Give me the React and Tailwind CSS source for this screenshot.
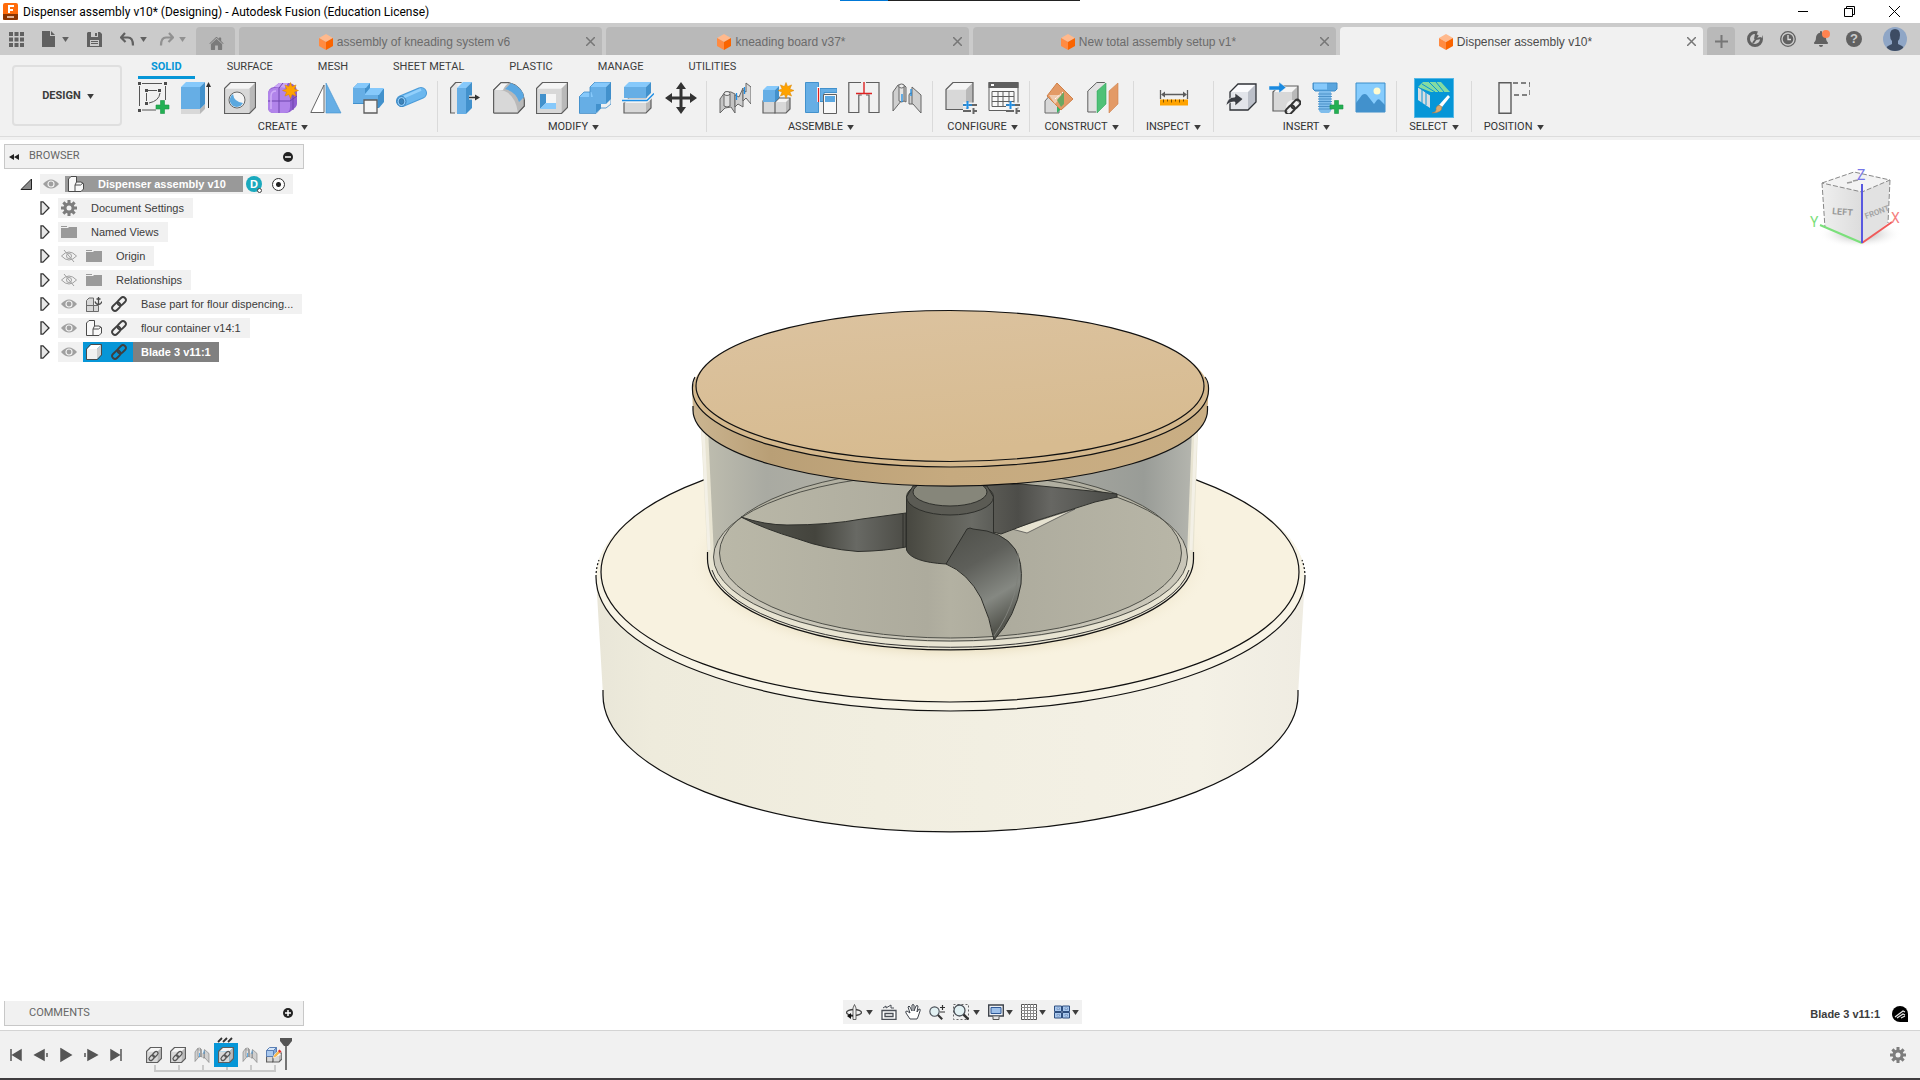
import { IoHome } from "react-icons/io5";
import { FaBell } from "react-icons/fa";

const BLUE = { front: "#66aee5", top: "#86c9fb", side: "#4291cc" };
const GREY = { front: "#d8d8d8", top: "#f5f5f5", side: "#b9b9b9" };

const Box = ({ x, y, w, h, d, c = GREY, stroke = "none" }) => (
  <g stroke={stroke} strokeWidth="1" strokeLinejoin="round">
    <path d={`M${x} ${y + d}h${w}v${h}h${-w}z`} fill={c.front} />
    <path d={`M${x} ${y + d}l${d} ${-d}h${w}l${-d} ${d}z`} fill={c.top} />
    <path d={`M${x + w} ${y + d}l${d} ${-d}v${h}l${-d} ${d}z`} fill={c.side} />
  </g>
);

// Grey box where only the silhouette is stroked
const OutlinedBox = ({ x, y, w, h, d, c = GREY }) => (
  <g>
    <Box x={x} y={y} w={w} h={h} d={d} c={c} />
    <path
      d={`M${x} ${y + d}l${d} ${-d}h${w}v${h}l${-d} ${d}h${-w}z`}
      fill="none"
      stroke="#5f5f5f"
      strokeWidth="1.2"
    />
  </g>
);

const Star = ({ x, y }) => (
  <path
    transform={`translate(${x} ${y})`}
    d="M0-8L1.6-3.9L5.6-5.6L3.9-1.6L8 0L3.9 1.6L5.6 5.6L1.6 3.9L0 8L-1.6 3.9L-5.6 5.6L-3.9 1.6L-8 0L-3.9-1.6L-5.6-5.6L-1.6-3.9Z"
    fill="#ffa300"
    stroke="#d98500"
    strokeWidth=".5"
  />
);

const Plus = ({ x, y }) => (
  <path
    transform={`translate(${x} ${y})`}
    d="M-2-6.500h4v4.500h4.500v4h-4.500v4.500h-4v-4.500h-4.500v-4h4.500z"
    fill="#23b053"
    stroke="#1b9645"
    strokeWidth=".6"
  />
);

const Sliders = () => (
  <g strokeWidth="2">
    <path d="M18 23h14M18 29h14" stroke="#f1f1f1" strokeWidth="5" />
    <path d="M18 23h3M24 23h8M18 29h8M29 29h3" stroke="#666" />
    <path d="M22.500 19v8" stroke="#1f8fe6" />
    <path d="M18 23h9" stroke="#1f8fe6" strokeWidth="1.500" />
    <path d="M28.500 26v6" stroke="#666" />
  </g>
);

const Chain = ({ x = 0, y = 0, color = "#333" }) => (
  <g
    transform={`translate(${x} ${y}) rotate(-45)`}
    fill="none"
    stroke={color}
    strokeWidth="2"
  >
    <rect x="-9" y="-3" width="10" height="6" rx="3" />
    <rect x="-1" y="-3" width="10" height="6" rx="3" />
  </g>
);

const icons = {
  sketch: (
    <>
      <path d="M4 1.500h20M1.500 4v20M27.500 4v14M4 28h14M10 8.500h9M8.500 11v8M11 21q10-2 11-10" stroke="#555" fill="none" />
      <path d="M0 0h3v3h-3zM26 0h3v3h-3zM0 27h3v3h-3zM7 7h3v3h-3zM20 7h3v3h-3zM7 20h3v3h-3z" fill="#4c4c4c" />
      <Plus x={24.500} y={25} />
    </>
  ),
  extrude: (
    <>
      <Box x={0} y={22} w={19} h={5} d={5} />
      <Box x={0} y={0} w={19} h={22} d={5} c={BLUE} />
      <path d="M27.500 26V3" stroke="#333" />
      <path d="M25 5l2.500-5l2.500 5z" fill="#333" />
    </>
  ),
  hole: (
    <>
      <OutlinedBox x={0.5} y={0.5} w={25} h={25} d={6} />
      <circle cx="13" cy="18" r="8" fill="#f4f4f4" stroke="#666" />
      <path d="M9 12q1 8 10 9a7 7 0 1 1-10-9z" fill="#5ba8df" />
    </>
  ),
  form: (
    <>
      <path d="M1 12Q1 6 7 5L12 1H22Q30 2 30 10V22Q30 25 24 29Q22 31 17 31H7Q1 31 1 25Z" fill="#8f5ed0" />
      <path d="M1 12Q1 7 7 6H17Q23 7 23 12V25Q23 31 17 31H7Q1 31 1 25Z" fill="#b184ea" />
      <path d="M7 5L12 1H21L18 6Z" fill="#caa5f6" />
      <path d="M1 19H23M12 6V31M12 6L16 1M23 19L30 14M26 28V10" stroke="#6f45ad" fill="none" />
      <path d="M4 27V14Q4 9 9 9" stroke="#cfadf8" strokeWidth="1.500" fill="none" />
      <Star x={23.500} y={8.500} />
    </>
  ),
  mirror: (
    <>
      <path d="M.8 30.500H14V3z" fill="#fff" stroke="#666" />
      <path d="M16 1L31 31H16z" fill="#66aee5" stroke="#4291cc" strokeWidth=".6" />
    </>
  ),
  derive: (
    <>
      <path d="M0 6l5-5h12v6h14v13l-5 6h-9l-5-4H0z" fill="#4291cc" />
      <path d="M0 6h12v7h13v12h-9v-4H0z" fill="#66aee5" />
      <path d="M0 6l5-5h12l-4 5zM12 12l5-6h14l-5 7H12z" fill="#86c9fb" />
      <path d="M11 18h13v13h-13z" fill="#f4f4f4" stroke="#5c5c5c" strokeWidth="1.300" />
    </>
  ),
  pipe: (
    <>
      <path d="M6 19L25 11" stroke="#4b9bd8" strokeWidth="12" strokeLinecap="round" />
      <path d="M6 19L25 11" stroke="#6bb7ee" strokeWidth="10" strokeLinecap="round" />
      <path d="M8 15L25 7.500" stroke="#92d0fc" strokeWidth="2.500" />
      <ellipse cx="5.500" cy="19.500" rx="4.500" ry="5" fill="#8ccafa" stroke="#357fb8" />
      <ellipse cx="5.500" cy="19.500" rx="2.300" ry="3" fill="#3b83ba" stroke="#285e8a" strokeWidth=".6" />
    </>
  ),
  pressPull: (
    <>
      <path d="M.6 31V6l5-5.500h2V31z" fill="#e4e4e4" />
      <path d="M5 31H.6V6l5-5.500h6" fill="none" stroke="#5f5f5f" strokeWidth="1.200" />
      <Box x={7} y={0} w={9} h={26} d={6} c={BLUE} />
      <path d="M19 15.500h8" stroke="#f1f1f1" strokeWidth="4" />
      <path d="M19 15.500h8" stroke="#333" strokeWidth="1.500" />
      <path d="M25 12.500l5 3l-5 3z" fill="#333" />
    </>
  ),
  fillet: (
    <>
      <path d="M.6 31V8L8 .6h8Q30 4 31.400 18v6L25 31z" fill="#b9b9b9" stroke="#5f5f5f" />
      <path d="M1 31V8h6q15 2 18 23z" fill="#d8d8d8" />
      <path d="M1 8L8 1h8q-4 2-6 7z" fill="#f5f5f5" />
      <path d="M12 7l6-6q12 5 13 14l-5 5Q23 10 12 7z" fill="#5ba8e2" />
      <path d="M.6 31V8L8 .6h8M31.400 18v6L25 31H.6" fill="none" stroke="#5f5f5f" strokeWidth="1.200" />
    </>
  ),
  shell: (
    <>
      <OutlinedBox x={0.5} y={0.5} w={25} h={25} d={6} />
      <path d="M4 12h16v15H4z" fill="#f5f5f5" />
      <path d="M4 12h6v9l-6 6z" fill="#4291cc" />
      <path d="M10 21h10v6H4z" fill="#86c9fb" />
    </>
  ),
  combine: (
    <>
      <Box x={11} y={0} w={16} h={17} d={5} c={BLUE} />
      <Box x={0} y={10} w={17} h={16} d={5} c={BLUE} />
      <path d="M11 5h16v17h-11z" fill="#66aee5" />
      <path d="M0 15l5-5h6v5M11 10V5l5-5h16v22l-5 4h-5l-5 5.500H.5V15" fill="none" stroke="#3d8ac6" strokeWidth=".8" />
    </>
  ),
  split: (
    <>
      <OutlinedBox x={2} y={16} w={22} h={10} d={5} />
      <Box x={2} y={0} w={22} h={11} d={5} c={BLUE} />
      <path d="M0 18.500h25l7-7" stroke="#f1f1f1" strokeWidth="4" fill="none" />
      <path d="M0 18.500h25l7-7" stroke="#1f8fe6" strokeWidth="1.500" fill="none" />
    </>
  ),
  move: (
    <path d="M16 0l5 7h-3.500v7.500h7.500V11l7 5l-7 5v-3.500h-7.500v7.500H21l-5 7l-5-7h3.500v-7.500H7V21l-7-5l7-5v3.500h7.500V7H11z" fill="#333" />
  ),
  joint: (
    <g stroke="#666" strokeLinejoin="round">
      <path d="M1 31V17l5-7h6l4 2v19l-4-6-6 1z" fill="#c4c4c4" />
      <path d="M5 12v12q3 2 6 0V12" fill="#dedede" />
      <ellipse cx="8" cy="11.500" rx="3" ry="2" fill="#eee" />
      <path d="M16 13l4 2l4-9v19l-5-3-3 3z" fill="#cfcfcf" />
      <path d="M24 8l3 2V1l5 4v17l-5-6-3 3z" fill="#dadada" />
      <path d="M17.500 11v7M25.500 5v7" stroke="#1f8fe6" strokeWidth="1.300" />
    </g>
  ),
  newComponent: (
    <>
      <OutlinedBox x={1} y={15} w={12} h={12} d={4} />
      <OutlinedBox x={13} y={16} w={11} h={11} d={4} />
      <Box x={1} y={4} w={12} h={12} d={4} c={BLUE} />
      <Star x={24} y={8.500} />
    </>
  ),
  rigid: (
    <>
      <path d="M.5.500h13v30H.5zM15 6.500h17v4H19v9h-4z" fill="#66aee5" stroke="#4291cc" />
      <path d="M13.500 5v15" stroke="#fff" strokeWidth="3" />
      <path d="M13.500 6v14" stroke="#d22" strokeWidth="1.300" />
      <path d="M18.500 12.500h13v19h-13z" fill="#f8f8f8" stroke="#5f5f5f" />
      <path d="M20 14h10v6H20z" fill="#5ba8e2" />
    </>
  ),
  asBuilt: (
    <g fill="none">
      <path d="M13 .500H.8v30h10V13h3M18 .500h13v30h-10V13h-3" stroke="#5f5f5f" strokeWidth="1.200" />
      <path d="M16 0v11M8 11.500h16" stroke="#d22" strokeWidth="1.400" />
    </g>
  ),
  jointOrigin: (
    <g stroke="#666" strokeLinejoin="round">
      <path d="M2 29V10l5-7h6l2 2v15l-4-2z" fill="#cfcfcf" />
      <path d="M8 4v15q3 2 5 0V4" fill="#e4e4e4" />
      <ellipse cx="10.500" cy="4" rx="2.800" ry="2" fill="#eee" />
      <path d="M18 13q0-2 3-2V5l9 8v18l-8-9h-4z" fill="#d0d0d0" />
      <path d="M21 11v11" />
      <path d="M11 12v8M20 7v7" stroke="#1f8fe6" strokeWidth="1.300" />
    </g>
  ),
  configure: (
    <>
      <OutlinedBox x={1} y={0.5} w={20} h={20} d={7} />
      <Sliders />
    </>
  ),
  configTable: (
    <>
      <path d="M1 .500h29v28H1z" fill="#f8f8f8" stroke="#5f5f5f" />
      <path d="M.5 0h30v6H.5z" fill="#5f5f5f" />
      <path d="M3 2h3v2H3z" fill="#fff" />
      <path d="M4 9.500h22v15H4zM4 14.500h22M4 19.500h22M10 9.500v15M15 9.500v15M21 9.500v15" stroke="#5f5f5f" fill="none" />
      <Sliders />
    </>
  ),
  plane: (
    <>
      <path d="M1 31V19l6-7h8v19z" fill="#d8d8d8" stroke="#6b6b6b" />
      <path d="M13 31l7-7V10l-7 7z" fill="#35b463" />
      <path d="M13 1l16 16l-12 11L3 14z" fill="#e39a66" stroke="#d08048" />
      <path d="M5 13h14l-8 9z" fill="#f0cbb0" />
      <path d="M13 18l7-8v12l-3 3z" fill="#6ba661" />
      <path d="M11 17l8-7" stroke="#fff" strokeDasharray="2 1" />
    </>
  ),
  offsetPlane: (
    <>
      <path d="M1 30V9l9-8.500h9L9 10v20z" fill="#e2e2e2" />
      <path d="M9 30H.8V9l9-8.500h8" fill="none" stroke="#5f5f5f" />
      <path d="M10 9l9-8v21l-9 9z" fill="#4fc177" stroke="#2fa259" strokeWidth=".6" />
      <path d="M22 9l9-8v21l-9 9z" fill="#e39a66" stroke="#cd824f" strokeWidth=".6" />
    </>
  ),
  measure: (
    <>
      <path d="M2.500 8v9M29.500 8v9M5 12.500h22" stroke="#5c5c5c" strokeWidth="1.300" />
      <path d="M3 12.500l4-3v6zM29 12.500l-4-3v6z" fill="#5c5c5c" />
      <path d="M2 17.500h28v6H2z" fill="#ffa300" />
      <path d="M5.500 17.500v3M9.500 17.500v2M13.500 17.500v3M17.500 17.500v2M21.500 17.500v3M25.500 17.500v2" stroke="#7a4e00" />
    </>
  ),
  insertDerive: (
    <>
      <Box x={4} y={2} w={18} h={18} d={8} c={{ front: "#e2e4ea", top: "#fbfbfd", side: "#bcc0c9" }} />
      <path d="M4 28V10l8-8h18v18l-8 8z" fill="none" stroke="#2f3237" strokeWidth="1.300" />
      <path d="M0 24q1-9 9-9v-4l8 6l-8 7v-4q-5-1-9 4z" fill="#3a3d44" stroke="#fff" strokeWidth=".6" />
    </>
  ),
  insertLink: (
    <>
      <OutlinedBox x={4} y={4} w={19} h={19} d={6} />
      <path d="M0 4h10V0l7 5.500l-7 5.500V8H0z" fill="#1a8ae0" stroke="#f1f1f1" strokeWidth=".5" />
      <circle cx="24" cy="25" r="7" fill="#f1f1f1" />
      <Chain x={24} y={25} />
    </>
  ),
  fastener: (
    <>
      <path d="M1 1h24v6l-2 2H3L1 7z" fill="#5aa5de" stroke="#3f8bc6" />
      <path d="M2 1.500h13v6H2z" fill="#86c9fb" />
      <path d="M7 9h12v20l-2 2H9l-2-2z" fill="#7fbdec" />
      <path d="M6 12h14M6 14.500h14M6 17h14M6 19.500h14M6 22h14M6 24.500h14M6 27h14" stroke="#4c92c9" />
      <Plus x={24.500} y={25} />
    </>
  ),
  canvas: (
    <>
      <path d="M1 1h29v29H1z" fill="#86ccfd" stroke="#3b8dc9" />
      <path d="M1 21l6-8q3-2 5 0l7 9l3-4q2-2 4 1l4 4v7H1z" fill="#4291cc" />
      <circle cx="22" cy="9" r="3.500" fill="#fffbd0" />
    </>
  ),
  select: (
    <>
      <path d="M0 5l5-5h18l9 10H13z" fill="#84dba2" />
      <path d="M0 5l12 8v13L0 18z" fill="#d9dde0" />
      <path d="M4 2l13 8M11 0l10 10M18 0l8 10M0 5l12 8M4 8v13M8 10v13" stroke="#0696d7" />
      <path d="M21 23l9-10l2 2l-8 10z" fill="#fff" />
      <path d="M14 31q5-1 4-5q2-5 6-1q0 6-10 6z" fill="#dba970" stroke="#a87b45" strokeWidth=".5" />
    </>
  ),
  position: (
    <g fill="none" stroke="#5c5c5c" strokeWidth="1.400">
      <path d="M1 .700h12v30.500H1z" />
      <path d="M15 1h17v12H15" strokeDasharray="5 3" />
    </g>
  ),
};

const groups = [
  { name: "CREATE", pad: "pl-3 pr-[9px]", items: ["sketch", "extrude", "hole", "form", "mirror", "derive", "pipe"] },
  { name: "MODIFY", pad: "pl-3 pr-[9px]", items: ["pressPull", "fillet", "shell", "combine", "split", "move"] },
  { name: "ASSEMBLE", pad: "pl-3 pr-[9px]", items: ["joint", "newComponent", "rigid", "asBuilt", "jointOrigin"] },
  { name: "CONFIGURE", pad: "pl-3 pr-[9px]", items: ["configure", "configTable"] },
  { name: "CONSTRUCT", pad: "px-[14px]", items: ["plane", "offsetPlane"] },
  { name: "INSPECT", pad: "px-3", items: ["measure"] },
  { name: "INSERT", pad: "pl-3 pr-[9px]", items: ["insertDerive", "insertLink", "fastener", "canvas"] },
  { name: "SELECT", pad: "px-3", items: ["select"] },
  { name: "POSITION", pad: "px-3", items: ["position"] },
];

const ribbonTabs = ["SOLID", "SURFACE", "MESH", "SHEET METAL", "PLASTIC", "MANAGE", "UTILITIES"];

const documents = [
  { name: "assembly of kneading system v6" },
  { name: "kneading board v37*" },
  { name: "New total assembly setup v1*" },
  { name: "Dispenser assembly v10*", active: true },
];

const Caret = ({ className = "text-[#3c3c3c]" }) => (
  <svg viewBox="0 0 8 6" className={`h-[5px] w-[7px] shrink-0 ${className}`} aria-hidden="true">
    <path d="M0 0h8l-4 6z" fill="currentColor" />
  </svg>
);

const Icon = ({ size = 16, box = size, children, className = "" }) => (
  <svg
    width={size}
    height={size}
    viewBox={`0 0 ${box} ${box}`}
    fill="none"
    aria-hidden="true"
    className={`shrink-0 ${className}`}
  >
    {children}
  </svg>
);

const TitleBar = () => (
  <header className="flex h-[23px] items-center bg-white pl-[3px] pr-[3px] font-[Roboto,sans-serif] text-xs text-black">
    <svg width="15" height="17" viewBox="0 0 15 17" className="mr-[5px]" aria-hidden="true">
      <path d="M2 0h11q2 0 2 2v14q0 1-2 1H2q-2 0-2-1V2q0-2 2-2z" fill="#ff6b0a" />
      <path d="M0 11h15v5q0 1-2 1H2q-2 0-2-1z" fill="#8a3300" />
      <path d="M5 2h6v2H7v2h3v2H7v2H5z" fill="#fff" />
      <path d="M4 13h7v2H4z" fill="#e2b596" />
    </svg>
    <h1 className="flex-1 truncate">
      Dispenser assembly v10* (Designing) - Autodesk Fusion (Education License)
    </h1>
    <button aria-label="Minimize" className="flex h-5 w-[45px] items-center justify-center">
      <Icon size={11}><path d="M0 5.500h10" stroke="#000" /></Icon>
    </button>
    <button aria-label="Restore" className="flex h-5 w-[46px] items-center justify-center">
      <Icon size={11}><path d="M.5 2.500h8v8h-8zM2.500 2.500v-2h8v8h-2" stroke="#000" /></Icon>
    </button>
    <button aria-label="Close" className="flex h-5 w-[45px] items-center justify-center">
      <Icon size={11}><path d="M0 0l11 11M11 0L0 11" stroke="#000" /></Icon>
    </button>
  </header>
);

const DocumentTab = ({ name, active }) => (
  <div
    className={`flex min-w-0 flex-1 items-center rounded-t pl-3 ${
      active ? "bg-[#f1f1f1] text-[#4b4b4b]" : "bg-[#b9b9b9] text-[#6b6b6b]"
    }`}
  >
    <button className="flex min-w-0 flex-1 items-center justify-center gap-1 pt-px text-xs">
      <svg width="14" height="16" viewBox="0 0 14 16" className="shrink-0" aria-hidden="true">
        <path d="M0 4l7-4l7 4l-7 4z" fill="#ffb98d" />
        <path d="M0 4l7 4v8l-7-4z" fill="#ff8b42" />
        <path d="M14 4l-7 4v8l7-4z" fill="#fa6400" />
      </svg>
      <span className="truncate">{name}</span>
    </button>
    <button aria-label={`Close ${name}`} className="flex w-6 justify-center">
      <Icon size={9}><path d="M0 0l9 9M9 0L0 9" stroke="#777" strokeWidth="1.500" /></Icon>
    </button>
  </div>
);

const TabBar = () => (
  <div className="flex h-8 bg-[#cbcbcb] pt-1 text-[#616161]">
    <div className="flex w-[196px] shrink-0 items-center pb-1 pl-[9px]">
      <button aria-label="Data panel" className="mr-[17px]">
        <Icon size={15}>
          <path d="M0 0h4v4H0zM5.500 0h4v4h-4zM11 0h4v4h-4zM0 5.500h4v4H0zM5.500 5.500h4v4h-4zM11 5.500h4v4h-4zM0 11h4v4H0zM5.500 11h4v4h-4zM11 11h4v4h-4z" fill="#616161" />
        </Icon>
      </button>
      <button aria-label="File" className="mr-[18px] flex items-center gap-[5px]">
        <Icon size={16}><path d="M1 0h8v5h5v11H1zM10 0l4 4h-4z" fill="#616161" /></Icon>
        <Caret className="text-[#616161]" />
      </button>
      <button aria-label="Save" className="mr-[18px]">
        <Icon size={15}>
          <path d="M1 0h12l2 2v13H0V1z" fill="#616161" />
          <path d="M4 0h7v5H4zM3 8h9v6H3z" fill="#cbcbcb" />
          <path d="M8 1h2v3H8zM4 9h7v1H4zM4 11h7v1H4z" fill="#616161" />
        </Icon>
      </button>
      <button aria-label="Undo" className="mr-3 flex items-center gap-[5px]">
        <Icon size={15}>
          <path d="M5 1L1 5.500L5.500 10M1 5.500h7q5 0 5 8" stroke="#616161" strokeWidth="2.200" />
        </Icon>
        <Caret className="text-[#616161]" />
      </button>
      <button aria-label="Redo" className="flex items-center gap-[5px]">
        <Icon size={15}>
          <path d="M10 1l4 4.500L9.500 10M14 5.500H7q-5 0-5 8" stroke="#919191" strokeWidth="2.200" />
        </Icon>
        <Caret className="text-[#919191]" />
      </button>
    </div>
    <div className="flex min-w-0 flex-1 gap-1">
      <button aria-label="Home" className="flex w-[39px] shrink-0 items-center justify-center rounded-t bg-[#b9b9b9] pl-[2px] pt-1">
        <IoHome className="size-[15px] text-[#7b7b7b]" />
      </button>
      {documents.map((doc) => (
        <DocumentTab key={doc.name} {...doc} />
      ))}
      <button aria-label="New design" className="flex w-7 shrink-0 items-center justify-center rounded-t bg-[#b9b9b9]">
        <Icon size={13}><path d="M0 6.500h13M6.500 0v13" stroke="#777" strokeWidth="2" /></Icon>
      </button>
    </div>
    <div className="flex shrink-0 items-center gap-[17px] pb-1 pl-3 pr-[13px]">
      <button aria-label="Extensions">
        <Icon size={16}>
          <circle cx="8" cy="8" r="6.500" stroke="#616161" strokeWidth="3" />
          <path d="M8 9l3 1l4-4V0h-4z" fill="#cbcbcb" />
          <path d="M6 12l3-4M8 8l1-5M9 8l5-1M8 8l3-4" stroke="#616161" strokeWidth="2" />
        </Icon>
      </button>
      <button aria-label="Job status">
        <Icon size={16}>
          <circle cx="8" cy="8" r="7.300" stroke="#616161" strokeWidth="1.300" />
          <circle cx="8" cy="8" r="5.300" fill="#616161" />
          <path d="M8 4v4.500h3" stroke="#ddd" strokeWidth="1.300" />
        </Icon>
      </button>
      <button aria-label="Notifications" className="relative">
        <FaBell className="size-4" />
        <span className="absolute -right-px -top-px size-2 rounded-full bg-[#ff8350]" />
      </button>
      <button aria-label="Help" className="mr-1 flex size-4 items-center justify-center rounded-full bg-[#616161] text-[13px] font-bold leading-4 text-[#cbcbcb]">
        ?
      </button>
      <button aria-label="Account">
        <Icon size={24}>
          <circle cx="12" cy="12" r="12" fill="#8fa6c6" />
          <path d="M7 8q0-6 5-6t5 6q0 4-2 6v3l4 2q2 1 1 2q-3 3-8 3t-8-3q-1-1 1-2l4-2v-3q-2-2-2-6z" fill="#3d4c63" />
        </Icon>
      </button>
    </div>
  </div>
);

const ToolGroup = ({ name, pad, items, last }) => (
  <section
    aria-label={name}
    className={`flex h-[51px] flex-col items-center ${pad} ${last ? "" : "border-r border-[#dadada]"}`}
  >
    <div className="flex h-[34px] shrink-0 items-center gap-[11px]">
      {items.map((item) => (
        <button
          key={item}
          aria-label={item}
          className={
            item === "select"
              ? "flex h-10 w-10 items-center justify-center border border-[#56b8e6] bg-[#0696d7]"
              : "flex"
          }
        >
          <Icon size={32}>{icons[item]}</Icon>
        </button>
      ))}
    </div>
    <button className="flex shrink-0 items-center gap-1 pt-[6px] text-[11px] leading-3 text-[#333]">
      {name} <Caret />
    </button>
  </section>
);

const Ribbon = () => (
  <div className="flex h-[85px] border-b-[3px] border-[#f1f1f1] bg-[#f1f1f1] font-[Roboto,sans-serif]">
    <div className="flex flex-1 border-b border-[#dcdcdc] pl-3">
      <button className="mt-[10px] flex h-[61px] w-[110px] shrink-0 items-center justify-center gap-[6px] rounded border-2 border-[#dfdfdf] pl-[2px] pt-[2px] text-[11px] font-bold text-[#3c3c3c]">
        DESIGN <Caret />
      </button>
      <div className="pl-1">
        <nav className="flex h-[26px] gap-[19px] pb-[2px] pl-3">
          {ribbonTabs.map((tab) => (
            <button
              key={tab}
              className={`border-b-[3px] px-[13px] pt-[3px] text-[11px] leading-3 ${
                tab === "SOLID"
                  ? "border-[#0696d7] font-bold text-[#0696d7]"
                  : "border-transparent text-[#3c3c3c]"
              }`}
            >
              {tab}
            </button>
          ))}
        </nav>
        <div className="flex">
          {groups.map((group, i) => (
            <ToolGroup key={group.name} {...group} last={i === groups.length - 1} />
          ))}
        </div>
      </div>
    </div>
  </div>
);

const Eye = () => (
  <Icon>
    <path d="M0 8q8-9 16 0q-8 9-16 0z" fill="#a0a0a0" />
    <circle cx="8" cy="8" r="3" stroke="#f1f1f1" strokeWidth="1.200" />
  </Icon>
);

const EyeOff = () => (
  <Icon>
    <path d="M.5 8q7.500-8 15 0q-7.500 8-15 0z" stroke="#a0a0a0" />
    <circle cx="8" cy="8" r="2.500" stroke="#a0a0a0" />
    <path d="M3 2l10 12" stroke="#a0a0a0" />
  </Icon>
);

const Folder = () => (
  <Icon>
    <path d="M0 2h6v1H0zM0 4h7l1-1h8v11H0z" fill="#9a9a9a" />
  </Icon>
);

const Gear = () => (
  <Icon>
    <g fill="#7d7d7d">
      <path d="M6.500 0h3v16h-3zM0 6.500h16v3H0z" />
      <path d="M6.500 0h3v16h-3zM0 6.500h16v3H0z" transform="rotate(45 8 8)" />
      <circle cx="8" cy="8" r="5.500" />
    </g>
    <circle cx="8" cy="8" r="2.500" fill="#f1f1f1" />
  </Icon>
);

const Assembly = () => (
  <Icon>
    <path d="M.5 15.500V3L3 .5h5.500V6h4.500l2.500 1.500V13L13 15.500z" fill="#f8f8f8" stroke="#4a4a4a" strokeLinejoin="round" />
    <path d="M7 15V9h5.500l2.500-2M7 9l1.500-3" stroke="#4a4a4a" />
  </Icon>
);

const Grounded = () => (
  <Icon>
    <path d="M.5 15.500v-11L3 2h4.500v13.500zM7 9.500h5.500v6H.5M.5 9.500H7" fill="#d8d8d8" stroke="#6b6b6b" />
    <path d="M12.500 1v7M10.500 3h4M9 5.500q1 3 3.500 3t3.500-3" stroke="#4a4a4a" strokeWidth="1.300" />
  </Icon>
);

const Body = () => (
  <Icon>
    <Box x={1} y={1} w={10} h={10} d={4} c={{ front: "#f1f1f1", top: "#fff", side: "#cfcfcf" }} />
    <path d="M.5 15.500V5l4-4.500h11V11l-4 4.500z" stroke="#4a4a4a" strokeLinejoin="round" />
  </Icon>
);

const ChainIcon = () => (
  <Icon box={17}>
    <Chain x={8.500} y={8.500} color="#3f3f3f" />
  </Icon>
);

const tree = [
  { name: "Document Settings", parts: [Gear] },
  { name: "Named Views", parts: [Folder] },
  { name: "Origin", parts: [EyeOff, Folder] },
  { name: "Relationships", parts: [EyeOff, Folder] },
  { name: "Base part for flour dispencing...", parts: [Eye, Grounded, ChainIcon] },
  { name: "flour container v14:1", parts: [Eye, Assembly, ChainIcon] },
];

const Expander = () => (
  <button aria-label="Expand" className="mr-2 flex">
    <svg width="10" height="14" viewBox="0 0 10 14" fill="none" aria-hidden="true">
      <path d="M1 .800h2l6 6.200l-6 6.200h-2z" fill="#e8e8e8" stroke="#333" strokeWidth="1.300" />
    </svg>
  </button>
);

const PanelToggle = ({ open }) => (
  <Icon size={10}>
    <circle cx="5" cy="5" r="5" fill="#222" />
    <path d={open ? "M2 5h6" : "M2 5h6M5 2v6"} stroke="#fff" strokeWidth="1.500" />
  </Icon>
);

const Browser = () => (
  <aside className="w-[300px] text-[11px] text-[#3c3c3c]">
    <div className="flex h-[25px] items-center border border-[#c8c8c8] bg-[#f1f1f1] pl-1 pr-[10px]">
      <Icon size={10}><path d="M5 2v6L0 5zM10 2v6L5 5z" fill="#222" /></Icon>
      <h2 className="flex-1 pl-[10px] font-[Roboto,sans-serif] text-[#666]">BROWSER</h2>
      <button aria-label="Collapse browser"><PanelToggle open /></button>
    </div>
    <ul className="flex flex-col gap-1 pt-[5px]">
      <li className="flex h-5 items-center pl-4">
        <button aria-label="Collapse" className="mr-2 flex">
          <Icon size={12}><path d="M1 11.500L11.500 1v10.500z" fill="#8a8a8a" stroke="#222" /></Icon>
        </button>
        <div className="flex h-5 items-center gap-[6px] bg-[#f1f1f1] pl-[3px]">
          <Eye />
          <div className="flex h-4 w-[178px] items-center gap-[14px] whitespace-nowrap bg-[#999] pl-[3px] font-bold text-white">
            <Assembly />
            Dispenser assembly v10
          </div>
        </div>
        <div className="flex h-5 items-center gap-[10px] bg-[#f1f1f1] pl-[3px] pr-2">
          <span className="relative flex size-4 items-center justify-center rounded-full bg-[#1aa9bd] text-[11px] font-bold text-white">
            D
            <span className="absolute -bottom-px right-0 size-[5px] rounded-full border border-[#444] bg-white" />
          </span>
          <label className="flex">
            <input
              type="radio"
              defaultChecked
              aria-label="Activate component"
              className="size-[13px] appearance-none rounded-full border border-[#333] bg-white bg-[radial-gradient(circle,#222_0_2px,transparent_3px)]"
            />
          </label>
        </div>
      </li>
      {tree.map(({ name, parts }) => (
        <li key={name} className="flex h-5 items-center pl-9">
          <Expander />
          <div className="flex h-5 items-center gap-[9px] whitespace-nowrap bg-[#f1f1f1] pl-[3px] pr-[9px]">
            {parts.map((Part, i) => (
              <Part key={i} />
            ))}
            <span className="pl-[5px]">{name}</span>
          </div>
        </li>
      ))}
      <li className="flex h-5 items-center pl-9">
        <Expander />
        <span className="flex h-5 w-[25px] items-center bg-[#f1f1f1] pl-[3px]">
          <Eye />
        </span>
        <span className="flex h-5 w-[50px] items-center gap-[9px] bg-[#0696d7] pl-[3px]">
          <Body />
          <ChainIcon />
        </span>
        <span className="flex h-5 items-center bg-[#808080] px-2 font-bold text-white">
          Blade 3 v11:1
        </span>
      </li>
    </ul>
  </aside>
);

const ViewCube = () => (
  <svg width="100" height="90" viewBox="1805 162 100 90" className="mr-[15px] mt-[18px]" role="img" aria-label="View cube">
    <defs>
      <radialGradient id="cubeShadow">
        <stop offset="0" stopColor="#999" />
        <stop offset="1" stopColor="#fff" stopOpacity="0" />
      </radialGradient>
      <linearGradient id="cubeLeft" x1="0" x2="1">
        <stop offset="0" stopColor="#efefef" />
        <stop offset="1" stopColor="#dcdcdc" />
      </linearGradient>
    </defs>
    <ellipse cx="1860" cy="234" rx="42" ry="14" fill="url(#cubeShadow)" />
    <path d="M1822 183L1854 172L1890 180L1862 192Z" fill="#f3f3f3" />
    <path d="M1822 183L1862 192V243L1825 228Z" fill="url(#cubeLeft)" />
    <path d="M1862 192L1890 180L1888 223L1862 243Z" fill="#e2e2e2" />
    <path d="M1822 183L1854 172L1890 180L1862 192ZM1822 183L1825 228M1890 180L1888 223" fill="none" stroke="#888" strokeDasharray="5 2" />
    <path d="M1820 225L1862 243" stroke="#7be07b" strokeWidth="2" />
    <path d="M1862 243L1892 222" stroke="#f05a5a" strokeWidth="2" />
    <path d="M1862 184V243" stroke="#5858e0" strokeWidth="2" />
    <path d="M1847 183l5-1M1853 181l5-1" stroke="#999" strokeWidth="1.500" />
    <g fontFamily="Roboto, sans-serif" fontSize="12">
      <text x="1832" y="214" fill="#999" fontWeight="700" transform="rotate(5 1832 214)" fontSize="9">LEFT</text>
      <text x="1866" y="219" fill="#a5a5a5" fontWeight="700" transform="rotate(-20 1866 219)" fontSize="8">FRONT</text>
      <text x="1857" y="180" fill="#7777e8" fontSize="14">Z</text>
      <text x="1810" y="227" fill="#7be07b" fontSize="14">Y</text>
      <text x="1891" y="223" fill="#f58080" fontSize="14">X</text>
    </g>
  </svg>
);

const Model = () => (
  <svg viewBox="0 140 1920 890" className="absolute inset-0 size-full" role="img" aria-label="Dispenser assembly">
    <defs>
      <linearGradient id="baseSide" x1="0" x2="1">
        <stop offset="0" stopColor="#e9e6d8" />
        <stop offset=".08" stopColor="#eeebdc" />
        <stop offset=".4" stopColor="#f1eee0" />
        <stop offset=".85" stopColor="#f4f1e6" />
        <stop offset="1" stopColor="#efece2" />
      </linearGradient>
      <linearGradient id="lidTop" x1="0" y1="0" x2=".3" y2="1">
        <stop offset="0" stopColor="#dcc3a0" />
        <stop offset="1" stopColor="#d7bb90" />
      </linearGradient>
      <linearGradient id="lidSide" x1="0" x2="1">
        <stop offset="0" stopColor="#cbb591" />
        <stop offset=".15" stopColor="#b99f76" />
        <stop offset=".5" stopColor="#c6aa7f" />
        <stop offset="1" stopColor="#c9ae84" />
      </linearGradient>
      <linearGradient id="glass" x1="0" x2="1">
        <stop offset="0" stopColor="#bdbcae" />
        <stop offset=".12" stopColor="#a9aaa2" />
        <stop offset=".3" stopColor="#b0afa4" />
        <stop offset=".7" stopColor="#a7a8a0" />
        <stop offset=".9" stopColor="#999c97" />
        <stop offset="1" stopColor="#b4b5ae" />
      </linearGradient>
      <linearGradient id="floor" x1="0" x2="1">
        <stop offset="0" stopColor="#bab8a8" />
        <stop offset=".45" stopColor="#adab9d" />
        <stop offset=".5" stopColor="#b3b1a2" />
        <stop offset=".6" stopColor="#adab9d" />
        <stop offset="1" stopColor="#b8b6a7" />
      </linearGradient>
      <linearGradient id="hub" x1="0" x2="1">
        <stop offset="0" stopColor="#474740" />
        <stop offset=".3" stopColor="#57574f" />
        <stop offset=".75" stopColor="#6a6b65" />
        <stop offset="1" stopColor="#5c5d58" />
      </linearGradient>
      <linearGradient id="bladeLeft" x1="0" x2="1">
        <stop offset="0" stopColor="#52534c" />
        <stop offset=".45" stopColor="#44443d" />
        <stop offset=".7" stopColor="#686964" />
        <stop offset="1" stopColor="#4c4c46" />
      </linearGradient>
      <linearGradient id="bladeRight" x1="0" x2="1">
        <stop offset="0" stopColor="#5d5d57" />
        <stop offset=".25" stopColor="#4d4d49" />
        <stop offset=".5" stopColor="#676763" />
        <stop offset="1" stopColor="#4a4b47" />
      </linearGradient>
      <linearGradient id="bladeFront" x1="0" y1="0" x2=".4" y2="1">
        <stop offset="0" stopColor="#4e4f49" />
        <stop offset=".4" stopColor="#5e5f5a" />
        <stop offset=".75" stopColor="#858882" />
        <stop offset="1" stopColor="#55564f" />
      </linearGradient>
      <radialGradient id="contact">
        <stop offset=".85" stopColor="#e9dfc2" />
        <stop offset="1" stopColor="#f8f2e0" stopOpacity="0" />
      </radialGradient>
    </defs>

    {/* Base */}
    <path d="M596 577L603 695A347.500 137 0 0 0 1298 695L1305 577A354.500 134 0 0 0 596 577Z" fill="url(#baseSide)" />
    <ellipse cx="950.500" cy="577" rx="354.500" ry="134" fill="#f8f4e6" />
    <ellipse cx="950" cy="572" rx="349" ry="130" fill="#f8f2e0" />
    <ellipse cx="950" cy="562" rx="262" ry="102" fill="url(#contact)" />
    <g fill="none" stroke="#111" strokeWidth="1.200">
      <ellipse cx="950" cy="572" rx="349" ry="130" />
      <path d="M596 577A354.500 134 0 0 0 1305 577" />
      <path d="M603 690V695A347.500 137 0 0 0 1298 695V690" />
      <path d="M596 577Q596 568 599 560M1305 577Q1305 568 1302 560" strokeDasharray="2 2" />
    </g>

    {/* Glass container */}
    <path d="M701 428L707.500 559A243 91 0 0 0 1193.500 559L1198 428Z" fill="#e8e4d2" />
    <path d="M708 428L714 557A237 84 0 0 0 1187 557L1192 428Z" fill="url(#glass)" />
    <ellipse cx="950.500" cy="557" rx="237" ry="85" fill="#c9c6b8" />
    <ellipse cx="950.500" cy="553" rx="231" ry="85" fill="url(#floor)" />
    <path d="M1012 529L1027 533L1075 509Z" fill="#e6e2d0" stroke="#444" strokeWidth=".7" />
    <g fill="none" stroke="#4f5049" strokeWidth="1">
      <ellipse cx="950.500" cy="557" rx="237" ry="84" />
      <ellipse cx="950.500" cy="553" rx="231" ry="85" />
      <path d="M707.500 552V559A243 91 0 0 0 1193.500 559V552" stroke="#111" strokeWidth="1.200" />
      <path d="M712 570A240 87 0 0 0 1189 570" stroke="#333" />
    </g>
    <path d="M703 428L709 550M1196 428L1191 550" stroke="#f6f4ec" strokeWidth="3" opacity=".8" />

    {/* Impeller */}
    <g stroke="#2e2f2b" strokeWidth="1">
      <path d="M741 517Q765 525 787 525Q830 525 862 519L906 513V547Q885 551 858 551.500Q825 549 798 539Q764 529 741 517Z" fill="url(#bladeLeft)" />
      <path d="M985 484H1021L1101 492L1117 494V497Q1095 501 1073 509Q1035 520 1001 534L985 530Z" fill="url(#bladeRight)" />
      <path d="M906.500 497V550Q911 562 946 564L993.500 535V497A43.500 18 0 0 0 906.500 497Z" fill="url(#hub)" />
      <path d="M906.500 497A43.500 18 0 0 0 993.500 497L987 486H913Z" fill="#5b5b54" />
      <ellipse cx="950" cy="492" rx="37" ry="14" fill="#86867a" />
      <path d="M946 564L967 529Q970 527 973 529Q1003 531 1015 549Q1023 562 1021 584Q1016 616 994 640Q990 618 981 598Q968 573 946 564Z" fill="url(#bladeFront)" />
      <path d="M1018 553Q1022 596 994 636" fill="none" stroke="#7f817b" />
      <path d="M903 514V548" />
    </g>

    {/* Lid */}
    <path d="M692 390L693 410A257 76 0 0 0 1207.500 410L1208.500 390Z" fill="url(#lidSide)" />
    <ellipse cx="950.500" cy="390" rx="258" ry="77" fill="#d4b88d" />
    <ellipse cx="950" cy="386" rx="254" ry="75.500" fill="url(#lidTop)" />
    <g fill="none" stroke="#111" strokeWidth="1.200">
      <ellipse cx="950" cy="386" rx="254" ry="75.500" />
      <path d="M695 377Q692 382 692.500 390A258 77 0 0 0 1208.500 390Q1209 382 1205 377" />
      <path d="M693 406V410A257 76 0 0 0 1207.500 410V406" />
    </g>
  </svg>
);

const Lens = () => (
  <>
    <circle cx="6.500" cy="6.500" r="5.500" fill="#e2f1f3" stroke="#4a4f57" strokeWidth="1.300" />
    <path d="M10.500 10.500l5 5" stroke="#333" strokeWidth="2.500" />
  </>
);

const viewTools = [
  {
    name: "Orbit",
    caret: true,
    art: (
      <>
        <ellipse cx="8" cy="8.500" rx="7.500" ry="3" stroke="#444" strokeWidth="1.300" />
        <path d="M7 15.500V4L8.500.5L10 4v11.500z" fill="#f1f1f1" stroke="#444" strokeWidth=".8" />
        <path d="M1 12l4-3v6z" fill="#111" />
        <path d="M3 12h4" stroke="#111" />
      </>
    ),
  },
  {
    name: "Look at",
    art: (
      <>
        <path d="M1 6.500h14v9H1zM4 9.500h8v3H4z" fill="#fff" stroke="#4a4f57" strokeWidth="1.300" />
        <path d="M2 4l3-2v2l5-3v3h3" stroke="#4a4f57" />
      </>
    ),
  },
  {
    name: "Pan",
    art: (
      <path d="M5 15L1 9q-1-2 1-2l3 2L3 3q1-2 2 0l2 4V1q1-1 2 0v6l2-5q1-1 2 0l-1 6l2-3q2 0 1 2l-2 6l-1 2z" fill="#fff" stroke="#3f444c" />
    ),
  },
  {
    name: "Zoom",
    art: (
      <>
        <g transform="translate(0 2) scale(.85)"><Lens /></g>
        <path d="M11 3.500h5M13.500 1v5M11 8h5" stroke="#333" strokeWidth="1.200" />
      </>
    ),
  },
  {
    name: "Fit",
    caret: true,
    art: (
      <>
        <path d="M.5.5h15v15H.5z" stroke="#666" strokeDasharray="2 2" />
        <Lens />
      </>
    ),
  },
  {
    name: "Display settings",
    caret: true,
    tight: true,
    art: (
      <>
        <path d="M.7 1h14.600v11H.7z" fill="#eef1f5" stroke="#3f444c" strokeWidth="1.400" />
        <path d="M3 3.500h10v6H3z" fill="#9dc0ea" stroke="#305a98" />
        <path d="M5 12.500v3h6v-3" fill="#e8e8e8" stroke="#555" />
      </>
    ),
  },
  {
    name: "Grid and snaps",
    caret: true,
    tight: true,
    art: (
      <>
        <path d="M.5.5h15v15H.5z" fill="#fff" stroke="#555" />
        <path d="M3.500 0v16M6.500 0v16M9.500 0v16M12.500 0v16M0 3.500h16M0 6.500h16M0 9.500h16M0 12.500h16" stroke="#888" />
      </>
    ),
  },
  {
    name: "Viewports",
    caret: true,
    tight: true,
    art: (
      <>
        <path d="M.5 2h7v5.500h-7zM8.500 2h7v5.500h-7zM.5 8.500h7v5.500h-7zM8.500 8.500h7v5.500h-7z" fill="#a9c8ee" stroke="#2f4f80" />
        <path d="M3 4h2.500v1.500H3zM11 4h2.500v1.500H11zM3 10.500h2.500v1.500H3zM11 10.500h2.500v1.500H11z" fill="#dfeafa" stroke="#5a7fb5" strokeWidth=".6" />
      </>
    ),
  },
];

const ViewBar = () => (
  <div className="mb-[2px] flex h-6 items-center gap-2 bg-[#f1f1f1] px-[3px]">
    {viewTools.map(({ name, caret, tight, art }) => (
      <button key={name} aria-label={name} className={`flex items-center ${tight ? "gap-[2px]" : "gap-1"}`}>
        <Icon>{art}</Icon>
        {caret && <Caret />}
      </button>
    ))}
  </div>
);

const Viewport = () => (
  <main className="relative flex min-h-0 flex-1 flex-col justify-between bg-white">
    <Model />
    <div className="z-10 flex justify-between pl-1 pt-1">
      <Browser />
      <ViewCube />
    </div>
    <div className="z-10 grid grid-cols-[1fr_auto_1fr] items-end pb-1 pl-1">
      <div className="flex h-[25px] w-[300px] items-center border border-t-0 border-[#c8c8c8] bg-[#f1f1f1] pl-6 pr-[10px] text-[11px] text-[#666]">
        <h2 className="flex-1 pt-px font-[Roboto,sans-serif]">COMMENTS</h2>
        <button aria-label="Expand comments"><PanelToggle /></button>
      </div>
      <ViewBar />
      <div className="flex h-6 items-center justify-end gap-3 pr-3 text-[11px] font-bold text-[#3c3c3c]">
        Blade 3 v11:1
        <Icon>
          <path d="M8 0a8 8 0 0 1 8 8v8H8A8 8 0 0 1 8 0z" fill="#000" />
          <path d="M3 11l8-6l2 1M5 12l6-4l2 1M9 12l4-2" stroke="#e8e8e8" strokeWidth="1.200" />
        </Icon>
      </div>
    </div>
  </main>
);

const playback = [
  { name: "Go to start", d: "M3 2v12M5 8l8-5v10z" },
  { name: "Step back", d: "M2 8l9-5v10zM14 6v4" },
  { name: "Play", d: "M3 2l10 6l-10 6z" },
  { name: "Step forward", d: "M14 8L5 3v10zM2 6v4" },
  { name: "Go to end", d: "M13 2v12M11 8L3 3v10z" },
];

const LinkedBody = () => (
  <Icon>
    <OutlinedBox x={0.5} y={0.5} w={11} h={11} d={4} />
    <g transform="translate(7.500 9) scale(.62)">
      <Chain color="#555" />
    </g>
  </Icon>
);

const TimelineJoint = () => (
  <Icon box={32}>{icons.jointOrigin}</Icon>
);

const Timeline = () => (
  <footer className="flex h-12 items-center border-t border-[#d4d4d4] bg-[#f1f1f1]">
    <div className="flex gap-[9px] pl-2">
      {playback.map(({ name, d }) => (
        <button key={name} aria-label={name}>
          <Icon>
            <path d={d} fill="#555" stroke="#555" strokeWidth="1.500" />
          </Icon>
        </button>
      ))}
    </div>
    <div className="relative ml-[22px] flex h-full items-center">
      <svg width="124" height="7" viewBox="0 0 124 7" className="absolute bottom-[6px] left-2" aria-hidden="true">
        <path d="M1 0v6h120V0M25 0v6M49 0v6M73 0v6M97 0v6" fill="none" stroke="#c9c9c9" strokeWidth="2" />
      </svg>
      <button aria-label="Insert 1" className="relative flex w-6"><LinkedBody /></button>
      <button aria-label="Insert 2" className="relative flex w-6"><LinkedBody /></button>
      <button aria-label="Joint 1" className="relative flex w-5"><TimelineJoint /></button>
      <button aria-label="Insert 3" className="relative flex h-6 w-6 items-center justify-center bg-[#0696d7]">
        <svg width="18" height="6" viewBox="0 0 18 6" className="absolute -top-[6px] left-[3px]" aria-hidden="true">
          <path d="M1 5l4-4M6 5l4-4M11 5l4-4" stroke="#333" strokeWidth="1.800" />
        </svg>
        <LinkedBody />
      </button>
      <button aria-label="Joint 2" className="relative ml-1 flex w-6"><TimelineJoint /></button>
      <button aria-label="Edit in place" className="relative flex">
        <Icon>
          <OutlinedBox x={0.5} y={6} w={6} h={6} d={3} />
          <OutlinedBox x={7} y={6} w={6} h={6} d={3} />
          <Box x={0.5} y={0.5} w={7} h={6} d={3} c={{ front: "#a9c8ee", top: "#d5e5f8", side: "#7fa6d6" }} stroke="#5a7fb5" />
          <path d="M7 11l1-3l5-5l2 2l-5 5z" fill="#f8b84e" stroke="#fff" strokeWidth=".5" />
          <path d="M12 4l1.500-1.500l2 2L14 6z" fill="#e03030" />
        </Icon>
      </button>
      <svg width="13" height="33" viewBox="0 0 13 33" className="-ml-[2px]" aria-label="Timeline marker">
        <path d="M0 0h12v3L8 8H4L0 3z" fill="#555" />
        <path d="M6 8v24" stroke="#555" strokeWidth="1.600" />
      </svg>
    </div>
    <button aria-label="Settings" className="ml-auto mr-[14px]"><Gear /></button>
  </footer>
);

const App = () => (
  <div className="relative flex h-screen flex-col overflow-hidden font-['Liberation_Sans',sans-serif]">
    <div className="absolute left-1/2 top-0 flex h-px w-60 -translate-x-1/2 bg-[#222]">
      <span className="w-12 bg-[#0078d7]" />
    </div>
    <TitleBar />
    <TabBar />
    <Ribbon />
    <Viewport />
    <Timeline />
    <div className="h-[2px] bg-[#403d3f]" />
  </div>
);

export default App;
